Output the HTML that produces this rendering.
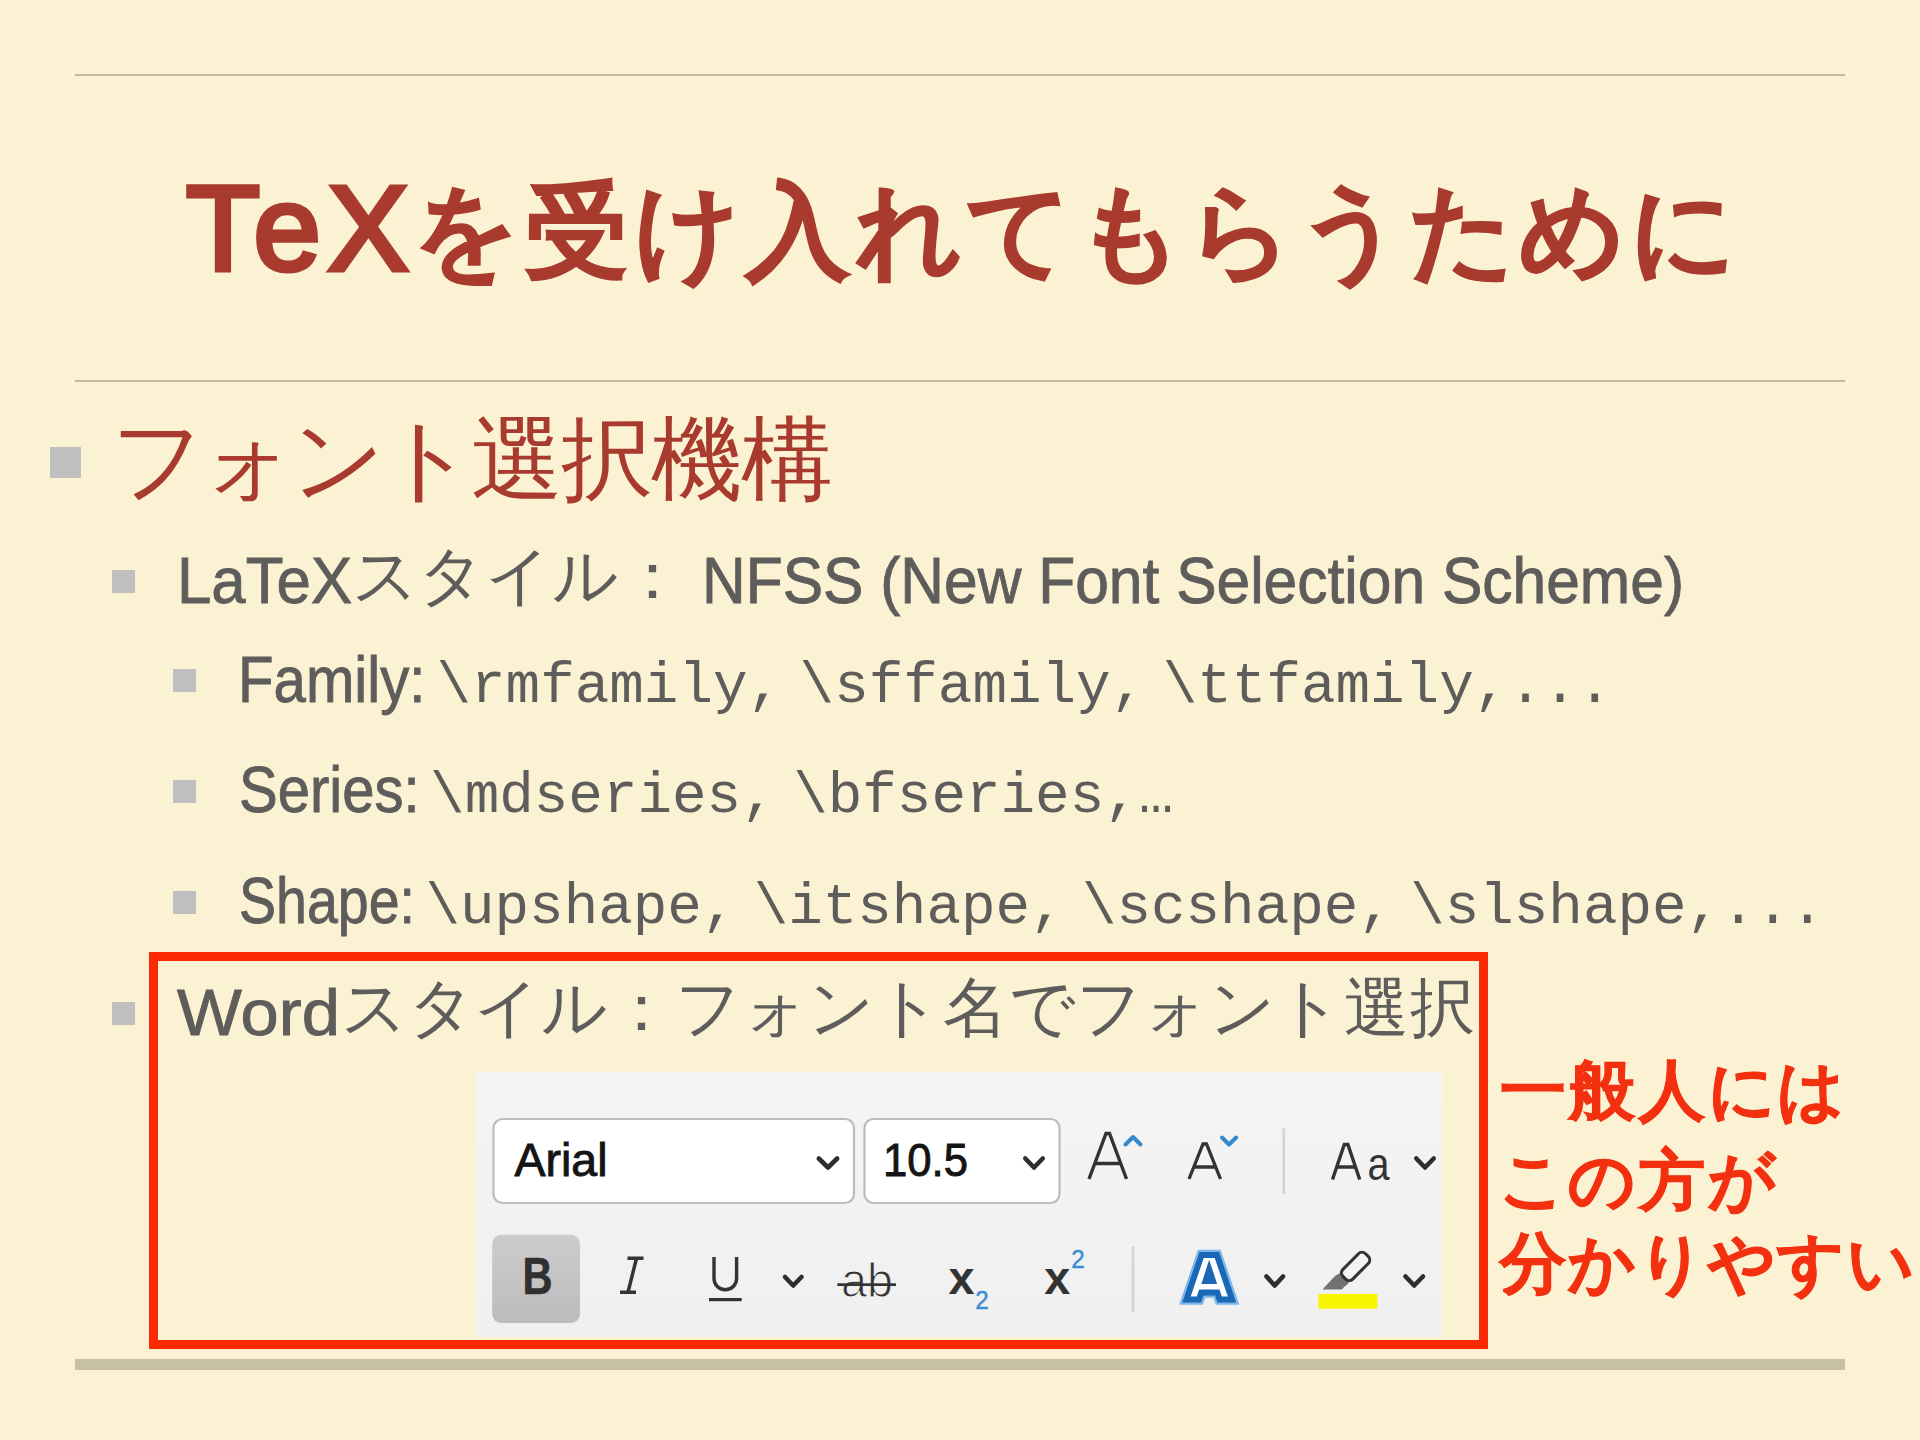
<!DOCTYPE html>
<html lang="ja">
<head>
<meta charset="utf-8">
<style>
html,body{margin:0;padding:0;}
body{width:1920px;height:1440px;position:relative;overflow:hidden;background:#FAF2D3;font-family:"Liberation Sans",sans-serif;}
.r{position:absolute;white-space:nowrap;line-height:1;transform-origin:0 0;}
.hl{position:absolute;left:75px;width:1770px;background:#C3BA9E;}
.sq{position:absolute;background:#BFBFC0;}
.g{color:#5E5D5B;}
.red{color:#A93A2E;}
.mono{font-family:"Liberation Mono",monospace;}
.j i{display:inline-block;font-style:normal;text-align:center;width:var(--w);}
</style>
</head>
<body>
<!-- rules -->
<div class="hl" style="top:74px;height:2px"></div>
<div class="hl" style="top:380px;height:2px"></div>
<div class="hl" style="top:1359px;height:11px;background:#C7C0A4"></div>

<!-- title -->
<div class="r red" style="left:186px;top:168px;font-size:121px;letter-spacing:7px;-webkit-text-stroke:5px #A93A2E">TeX</div>
<div class="r j red" style="left:410.86px;top:180px;font-size:103.6px;--w:110.6px;font-weight:bold;-webkit-text-stroke:1.6px #A93A2E"><i>を</i><i>受</i><i>け</i><i>入</i><i>れ</i><i>て</i><i>も</i><i>ら</i><i>う</i><i>た</i><i>め</i><i>に</i></div>

<!-- bullet 1 -->
<div class="sq" style="left:49.5px;top:446.5px;width:31px;height:31px"></div>
<div class="r j red" style="left:110.5px;top:414px;font-size:91.5px;--w:90px"><i>フ</i><i>ォ</i><i>ン</i><i>ト</i><i>選</i><i>択</i><i>機</i><i>構</i></div>

<!-- bullet 2 -->
<div class="sq" style="left:112px;top:570px;width:23px;height:23px"></div>
<div class="r g" style="left:177px;top:548px;font-size:65px;transform:scaleX(0.95);-webkit-text-stroke:0.9px #5E5D5B">LaTeX</div>
<div class="r j g" style="left:351.5px;top:543px;font-size:65px;--w:66.8px"><i>ス</i><i>タ</i><i>イ</i><i>ル</i><i>：</i></div>
<div class="r g" style="left:702px;top:548px;font-size:65px;transform:scaleX(0.931);-webkit-text-stroke:0.9px #5E5D5B">NFSS (New Font Selection Scheme)</div>

<!-- bullet 3 family -->
<div class="sq" style="left:173px;top:669px;width:23px;height:23px"></div>
<div class="r g" style="left:238.2px;top:647px;font-size:65px;transform:scaleX(0.895);-webkit-text-stroke:0.9px #5E5D5B">Family:</div>
<div class="r g mono" style="left:436.5px;top:657.5px;font-size:57.6px;word-spacing:-17.1px">\rmfamily, \sffamily, \ttfamily,...</div>

<!-- series -->
<div class="sq" style="left:173px;top:780px;width:23px;height:23px"></div>
<div class="r g" style="left:238.8px;top:757.4px;font-size:65px;transform:scaleX(0.893);-webkit-text-stroke:0.9px #5E5D5B">Series:</div>
<div class="r g mono" style="left:430.1px;top:768.3px;font-size:57.6px;word-spacing:-17.1px">\mdseries, \bfseries,…</div>

<!-- shape -->
<div class="sq" style="left:173px;top:891px;width:23px;height:23px"></div>
<div class="r g" style="left:238.9px;top:868.3px;font-size:65px;transform:scaleX(0.854);-webkit-text-stroke:0.9px #5E5D5B">Shape:</div>
<div class="r g mono" style="left:425.5px;top:879.2px;font-size:57.55px;word-spacing:-17.1px">\upshape, \itshape, \scshape, \slshape,...</div>

<!-- word -->
<div class="sq" style="left:112px;top:1002px;width:23px;height:23px"></div>
<div class="r g" style="left:177px;top:980px;font-size:65px;transform:scaleX(1.057);-webkit-text-stroke:0.9px #5E5D5B">Word</div>
<div class="r j g" style="left:340.8px;top:975px;font-size:65px;--w:66.8px"><i>ス</i><i>タ</i><i>イ</i><i>ル</i><i>：</i><i>フ</i><i>ォ</i><i>ン</i><i>ト</i><i>名</i><i>で</i><i>フ</i><i>ォ</i><i>ン</i><i>ト</i><i>選</i><i>択</i></div>

<!-- red frame -->
<div id="frame" style="position:absolute;left:149px;top:952px;width:1321px;height:379px;border:9px solid #FB2A05"></div>

<!-- red note -->
<div class="r j" style="left:1497.7px;top:1057px;font-size:66px;--w:69.72px;font-weight:bold;color:#F3300F;-webkit-text-stroke:1px #F3300F"><i>一</i><i>般</i><i>人</i><i>に</i><i>は</i></div>
<div class="r j" style="left:1497.7px;top:1147px;font-size:66px;--w:69.72px;font-weight:bold;color:#F3300F;-webkit-text-stroke:1px #F3300F"><i>こ</i><i>の</i><i>方</i><i>が</i></div>
<div class="r j" style="left:1497.7px;top:1230px;font-size:66px;--w:69.72px;font-weight:bold;color:#F3300F;-webkit-text-stroke:1px #F3300F"><i>分</i><i>か</i><i>り</i><i>や</i><i>す</i><i>い</i></div>

<!-- toolbar -->
<div id="tb" style="position:absolute;left:477px;top:1072px;width:965px;height:265px;background:#F2F2F2">
<svg width="965" height="265" viewBox="0 0 965 265" style="position:absolute;left:0;top:0" font-family="Liberation Sans, sans-serif">
<defs>
<linearGradient id="bg1" x1="0" y1="0" x2="0" y2="1"><stop offset="0" stop-color="#CCCCCC"/><stop offset="1" stop-color="#BCBCBC"/></linearGradient>
<linearGradient id="tbg" x1="0" y1="0" x2="0" y2="1"><stop offset="0" stop-color="#F4F4F5"/><stop offset="1" stop-color="#F0F0F1"/></linearGradient>
</defs>
<rect x="0" y="0" width="965" height="265" fill="url(#tbg)"/>
<!-- font name box -->
<rect x="16.5" y="47" width="360.5" height="84" rx="9" ry="9" fill="#FFFFFF" stroke="#BDBDBD" stroke-width="2.2"/>
<text x="37.5" y="104" font-size="46" fill="#141414" stroke="#141414" stroke-width="0.9" textLength="93" lengthAdjust="spacingAndGlyphs">Arial</text>
<polyline points="341.8,86.5 351,95.5 360.2,86.5" fill="none" stroke="#2E2E2E" stroke-width="4.6" stroke-linecap="round" stroke-linejoin="round"/>
<!-- size box -->
<rect x="387.5" y="47" width="195" height="84" rx="9" ry="9" fill="#FFFFFF" stroke="#BDBDBD" stroke-width="2.2"/>
<text x="406" y="104" font-size="46" fill="#141414" stroke="#141414" stroke-width="0.9" textLength="85" lengthAdjust="spacingAndGlyphs">10.5</text>
<polyline points="548.3,86.5 557,95.5 565.7,86.5" fill="none" stroke="#2E2E2E" stroke-width="4.6" stroke-linecap="round" stroke-linejoin="round"/>
<!-- grow font A^ -->
<path d="M612,107 L629,61.5 L632.5,61.5 L649.5,107 M618.5,91.5 L643,91.5" fill="none" stroke="#333333" stroke-width="3.4" stroke-linejoin="miter"/>
<polyline points="648.5,72.5 656,65 663.5,72.5" fill="none" stroke="#3389CC" stroke-width="4" stroke-linecap="round" stroke-linejoin="round"/>
<!-- shrink font A -->
<path d="M712,107 L726,72 L729.5,72 L743.5,107 M717.5,95 L738,95" fill="none" stroke="#333333" stroke-width="3.3" stroke-linejoin="miter"/>
<polyline points="745,65.5 752,72.5 759.2,65.5" fill="none" stroke="#3389CC" stroke-width="4" stroke-linecap="round" stroke-linejoin="round"/>
<!-- separator -->
<rect x="805.5" y="56.5" width="2.6" height="65.5" fill="#D3D3D3"/>
<!-- Aa -->
<path d="M855.5,107.5 L867.3,72.5 L870.9,72.5 L882.7,107.5 M860.5,95 L877.7,95" fill="none" stroke="#333333" stroke-width="3.4"/>
<text x="890.5" y="107.8" font-size="47" fill="#333333" textLength="22" lengthAdjust="spacingAndGlyphs">a</text>
<polyline points="939.3,86.5 948,95.5 956.7,86.5" fill="none" stroke="#2E2E2E" stroke-width="4.6" stroke-linecap="round" stroke-linejoin="round"/>
<!-- row 2 -->
<rect x="15.2" y="162.8" width="87.8" height="88.2" rx="9" ry="9" fill="url(#bg1)"/>
<text x="45.5" y="221.75" font-size="51" font-weight="bold" fill="#303030" stroke="#303030" stroke-width="0.6" textLength="30" lengthAdjust="spacingAndGlyphs">B</text>
<!-- italic I -->
<path d="M150.5,186.3 L166.5,186.3 M143,220.2 L159,220.2 M159.5,186.3 L151,220.2" fill="none" stroke="#333333" stroke-width="3.5"/>
<!-- U underline -->
<path d="M237,185 L237,206.5 A11.3,11.3 0 0 0 259.6,206.5 L259.6,185" fill="none" stroke="#333333" stroke-width="3.4"/>
<rect x="232" y="226" width="32.7" height="3.2" fill="#333333"/>
<polyline points="308,205 316.2,213.5 324.5,205" fill="none" stroke="#2E2E2E" stroke-width="4.6" stroke-linecap="round" stroke-linejoin="round"/>
<!-- strikethrough ab -->
<text x="364" y="225" font-size="48.5" fill="#333333" stroke="#F2F2F2" stroke-width="1.1" textLength="52" lengthAdjust="spacingAndGlyphs">ab</text>
<rect x="360.3" y="211.3" width="58.7" height="2.7" fill="#333333"/>
<!-- subscript -->
<text x="471.5" y="221.5" font-size="47" font-weight="bold" fill="#333333" textLength="26" lengthAdjust="spacingAndGlyphs">x</text>
<text x="498.3" y="236.5" font-size="25.5" fill="#3A8DD2" stroke="#3A8DD2" stroke-width="0.4" textLength="13.5" lengthAdjust="spacingAndGlyphs">2</text>
<!-- superscript -->
<text x="567.3" y="221.5" font-size="47" font-weight="bold" fill="#333333" textLength="26" lengthAdjust="spacingAndGlyphs">x</text>
<text x="594.3" y="195.8" font-size="25.5" fill="#3A8DD2" stroke="#3A8DD2" stroke-width="0.4" textLength="13.5" lengthAdjust="spacingAndGlyphs">2</text>
<!-- separator -->
<rect x="654.8" y="174.6" width="2.6" height="65.4" fill="#D3D3D3"/>
<!-- font color A -->
<path id="fa" d="M709.5,227.5 L724.6,183 L739.9,183 L755,227.5 L742.6,227.5 L740.3,220.5 L724.3,220.5 L722,227.5 Z M728.5,209 L736,209 L732.2,197.5 Z" fill="#FFFFFF" stroke="#7CB7E8" stroke-width="10.5" stroke-linejoin="miter" fill-rule="evenodd"/>
<path d="M709.5,227.5 L724.6,183 L739.9,183 L755,227.5 L742.6,227.5 L740.3,220.5 L724.3,220.5 L722,227.5 Z M728.5,209 L736,209 L732.2,197.5 Z" fill="#FFFFFF" stroke="#1A67B5" stroke-width="6" stroke-linejoin="miter" fill-rule="evenodd"/>
<polyline points="789.5,204.5 797.7,213.5 806,204.5" fill="none" stroke="#2E2E2E" stroke-width="4.6" stroke-linecap="round" stroke-linejoin="round"/>
<!-- highlighter -->
<path d="M845.4,217.5 L858,204 L863,201 L872,211 L867,215 L865,217.5 Z" fill="#727272"/>
<rect x="-16" y="-6.9" width="32" height="13.8" rx="5" ry="5" transform="translate(878.6 194.4) rotate(-45)" fill="#F3F3F3" stroke="#333333" stroke-width="3.1"/>
<rect x="841.4" y="221.9" width="59" height="14.8" fill="#F9F500"/>
<polyline points="928.5,204.5 937.2,213.5 946,204.5" fill="none" stroke="#2E2E2E" stroke-width="4.6" stroke-linecap="round" stroke-linejoin="round"/>
</svg>
</div>
</body>
</html>
